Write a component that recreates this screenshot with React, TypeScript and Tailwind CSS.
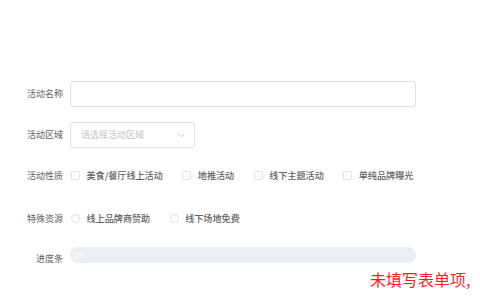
import React from "react";

const CHECKS = ["美食/餐厅线上活动", "地推活动", "线下主题活动", "单纯品牌曝光"];
const RADIOS = ["线上品牌商赞助", "线下场地免费"];

function Label({ text }: { text: string }) {
  return (
    <div className="w-[63px] shrink-0 text-right text-[9px] leading-[26px] text-[#606266]">
      {text}
    </div>
  );
}

export default function App() {
  return (
    <div
      className="w-[480px] h-[300px] bg-white overflow-hidden pt-[81px]"
      style={{ fontFamily: '"Noto Sans CJK SC", "Noto Sans", sans-serif' }}
    >
      {/* 活动名称 */}
      <div className="flex items-center h-[26px]">
        <Label text="活动名称" />
        <div className="ml-[7px] w-[346px] h-[26px] rounded-[3px] border border-[#dcdfe6] bg-white" />
      </div>

      {/* 活动区域 */}
      <div className="flex items-center h-[26px] mt-[15px]">
        <Label text="活动区域" />
        <div className="ml-[7px] w-[125px] h-[26px] rounded-[3px] border border-[#dcdfe6] bg-white flex items-center justify-between pl-[10px] pr-[9px]">
          <span className="text-[9px] text-[#c0c4cc]">请选择活动区域</span>
          <svg width="7" height="5" viewBox="0 0 7 5" fill="none">
            <polyline points="0.5,0.8 3.5,3.8 6.5,0.8" stroke="#c0c4cc" strokeWidth="0.9" />
          </svg>
        </div>
      </div>

      {/* 活动性质 */}
      <div className="flex items-center h-[26px] mt-[15px]">
        <Label text="活动性质" />
        <div className="ml-[8px] flex items-center gap-[19.5px]">
          {CHECKS.map((c) => (
            <div key={c} className="flex items-center gap-[6.5px]">
              <span className="w-[9px] h-[9px] rounded-[2px] border border-[#dcdfe6] bg-white" />
              <span className="text-[9.1px] font-medium text-[#606266]">{c}</span>
            </div>
          ))}
        </div>
      </div>

      {/* 特殊资源 */}
      <div className="flex items-center h-[26px] mt-[17px]">
        <Label text="特殊资源" />
        <div className="ml-[8px] flex items-center gap-[19.5px]">
          {RADIOS.map((r) => (
            <div key={r} className="flex items-center gap-[6.5px]">
              <span className="w-[9px] h-[9px] rounded-full border border-[#dcdfe6] bg-white" />
              <span className="text-[9.1px] font-medium text-[#606266]">{r}</span>
            </div>
          ))}
        </div>
      </div>

      {/* 进度条 */}
      <div className="flex items-start mt-[15px]">
        <div className="w-[63px] shrink-0 text-right text-[9px] leading-[24px] text-[#606266]">
          进度条
        </div>
        <div className="ml-[7px] w-[346px] h-[16px] rounded-full bg-[#ebeef5] flex items-center pl-[4px]">
          <span className="text-[8px] text-white">0%</span>
        </div>
      </div>

      <div className="pl-[370px] whitespace-nowrap text-[16px] leading-[16px] text-[#ff1f1f]">
        未填写表单项,
      </div>
    </div>
  );
}
